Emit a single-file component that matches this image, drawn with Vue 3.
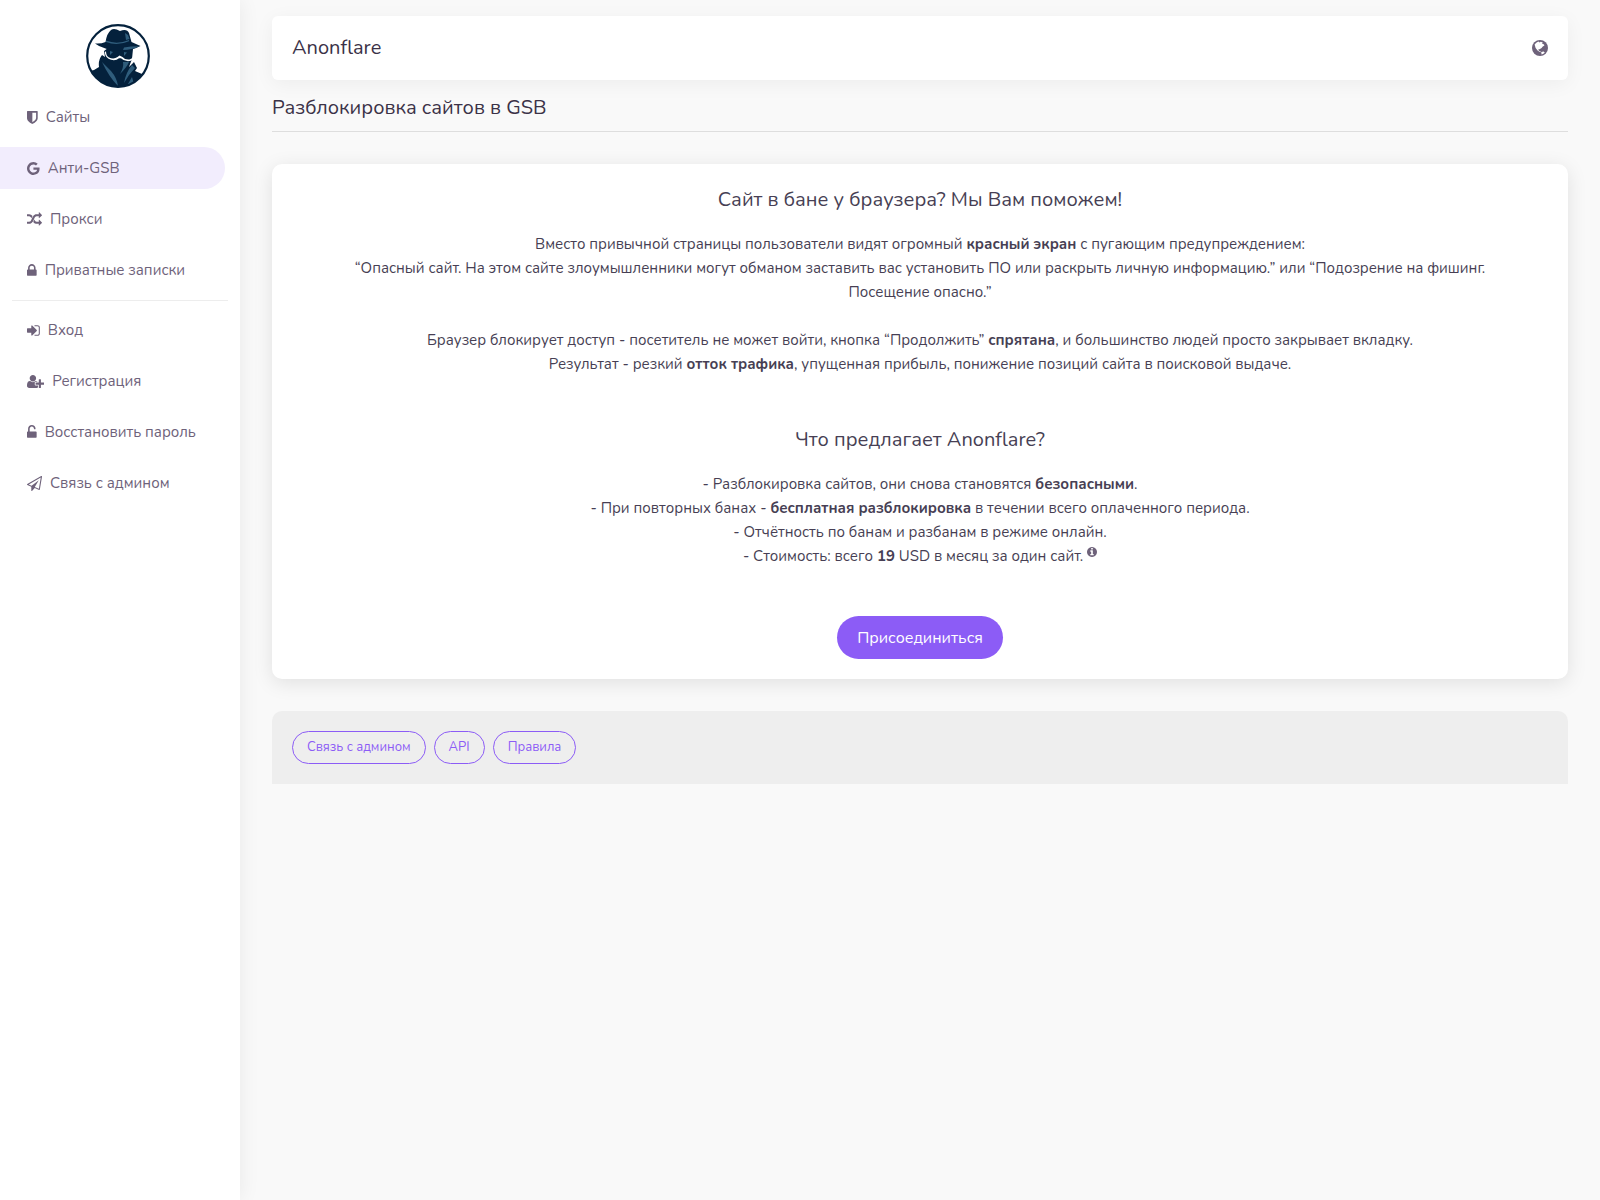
<template>
  <div class="layout">
    <aside class="sidebar">
      <a href="#" class="logo" aria-label="Anonflare">
        <svg viewBox="0 0 64 64" class="logo-img">
          <defs>
            <clipPath id="logo-clip"><circle cx="32" cy="32" r="31" /></clipPath>
          </defs>
          <circle cx="32" cy="32" r="30.8" fill="#fff" />
          <g clip-path="url(#logo-clip)">
            <!-- пальто и маска -->
            <path fill="#04213c" d="M0 48 L8 46 L13 43 Q12 36 16 31 L19 33 L18 27 L22 24 L47 25 L46 35 L43 43 L48 38 L51 44 L49 47 L56 50 L60 56 L46 66 H8 Z" />
            <!-- шляпа -->
            <path fill="#04213c" d="M9 19.5 Q15 20 19.5 18 Q21 9 25 6 Q28 3.5 34 7 Q41 4.5 43 9 L45.5 18 L54.5 22 Q45 27 35 26.5 Q17 26 9 19.5 Z" />
            <path fill="#2f5d7c" d="M20 16.5 Q31 21 43 16 L43 17.2 Q31 22.5 20 18 Z M39 9 L42 11 L43.5 15 L40 16 Z M38 23.5 Q46 22 53 22.2 Q46 26 37 26 Z" />
            <!-- очки -->
            <path fill="#fff" d="M20 27 Q20 32 23 33.5 Q28 35.5 31.5 33 L33.5 31.5 L36.5 33 Q39 36 43.5 35.5 Q47 34.5 47.5 31 L48.5 31.5 Q48.5 37 42 37.2 Q37.5 37 35 34.2 L33 34.2 Q30 37 25 35.8 Q19.5 34.5 18.8 28.5 Z" />
            <path fill="#2f5d7c" d="M24 27 L27 28 L24 31 Z M38 28 L41 28.5 L38 32 Z" />
            <!-- складки -->
            <path fill="#2f5d7c" d="M37 38 L43 38 Q41 43 34 50 Q38 43 37 38 Z M16 38 L25 47 Q31 54 32 62 Q23 53 16 38 Z M46 41 L49 44 Q43 50 38 59 Q40 48 46 41 Z M46 53 L48 60 L42 60 Z" />
          </g>
          <circle cx="32" cy="32" r="30.8" fill="none" stroke="#04213c" stroke-width="2.2" />
        </svg>
      </a>

      <nav class="menu">
        <template v-for="item in menu" :key="item.label">
          <hr v-if="item.divider" class="menu-divider" />
          <a href="#" class="menu-item" :class="{ active: item.active }">
            <svg class="icon" :viewBox="item.box"><path :d="item.path" /></svg>
            <span>{{ item.label }}</span>
          </a>
        </template>
      </nav>
    </aside>

    <main class="content">
      <header class="topbar">
        <span class="brand">Anonflare</span>
        <button type="button" class="lang-btn" aria-label="Язык">
          <svg class="globe" viewBox="0 0 16 16">
            <circle cx="8" cy="8" r="8" />
            <path class="land" d="M2.6 4.6 Q4 2.4 6.4 1.6 L7.6 2.4 L8.8 1.8 L10.8 2.4 L10 3.6 L12 4.4 L12.4 5.6 L10.8 6.4 L9.6 8 L7.6 9.2 L6.4 9.2 L6.8 10.8 L8.8 11.6 L8.4 12.2 L5.8 10.8 L3.6 8 Z M9.2 12 L11.6 11.6 L12.8 12.4 Q11.6 14 9.6 14.6 Z" />
          </svg>
        </button>
      </header>

      <h1 class="page-title">Разблокировка сайтов в GSB</h1>

      <section class="card">
        <h2>Сайт в бане у браузера? Мы Вам поможем!</h2>
        <p>
          Вместо привычной страницы пользователи видят огромный <b>красный экран</b> с пугающим предупреждением:<br />
          “Опасный сайт. На этом сайте злоумышленники могут обманом заставить вас установить ПО или раскрыть личную информацию.” или “Подозрение на фишинг. Посещение опасно.”
        </p>
        <p>
          Браузер блокирует доступ - посетитель не может войти, кнопка “Продолжить” <b>спрятана</b>, и большинство людей просто закрывает вкладку.<br />
          Результат - резкий <b>отток трафика</b>, упущенная прибыль, понижение позиций сайта в поисковой выдаче.
        </p>
        <h2 class="offer-title">Что предлагает Anonflare?</h2>
        <p>
          - Разблокировка сайтов, они снова становятся <b>безопасными</b>.<br />
          - При повторных банах - <b>бесплатная разблокировка</b> в течении всего оплаченного периода.<br />
          - Отчётность по банам и разбанам в режиме онлайн.<br />
          - Стоимость: всего <b>19</b> USD в месяц за один сайт.
          <svg class="info" viewBox="128 128 1536 1536"><path :d="infoPath" /></svg>
        </p>
        <button type="button" class="join-btn">Присоединиться</button>
      </section>

      <footer class="footer">
        <a v-for="link in footerLinks" :key="link" href="#" class="footer-link">{{ link }}</a>
      </footer>
    </main>
  </div>
</template>

<script setup>
// Пункты бокового меню
const menu = [
  {
    label: 'Сайты',
    box: '256 0 1280 1792',
    path: 'M1344 960v-640h-448v1137q119-63 213-137 235-184 235-360zm192-768v768q0 86-33.5 170.5t-83 150-118 127.5-126.5 103-121 77.5-89.5 49.5-42.5 20q-12 6-26 6t-26-6q-16-7-42.5-20t-89.5-49.5-121-77.5-126.5-103-118-127.5-83-150-33.5-170.5v-768q0-26 19-45t45-19h1152q26 0 45 19t19 45z'
  },
  {
    label: 'Анти-GSB',
    active: true,
    box: '128 0 1536 1792',
    path: 'M896 786h725q12 67 12 128 0 217-91 387.5t-259.5 266.5-386.5 96q-157 0-299-60.5t-245-163.5-163.5-245-60.5-299 60.5-299 163.5-245 245-163.5 299-60.5q300 0 515 201l-209 201q-123-119-306-119-129 0-238.5 65t-173.5 176.5-64 243.5 64 243.5 173.5 176.5 238.5 65q87 0 160-24t120-60 82-82 51.5-87 22.5-78h-436v-264z'
  },
  {
    label: 'Прокси',
    box: '0 0 1792 1792',
    path: 'M666 481q-60 92-137 273-22-45-37-72.5t-40.5-63.5-51-56.5-63-35-81.5-14.5h-224q-14 0-23-9t-9-23v-192q0-14 9-23t23-9h224q250 0 410 225zm1126 799q0 14-9 23l-320 320q-9 9-23 9-13 0-22.5-9.5t-9.5-22.5v-192q-32 0-85 .5t-81 1-73-1-71-5-64-10.5-63-18.5-58-28.5-59-40-55-53.5-56-69.5q59-93 136-273 22 45 37 72.5t40.5 63.5 51 56.5 63 35 81.5 14.5h256v-192q0-14 9-23t23-9q12 0 24 10l319 319q9 9 9 23zm0-896q0 14-9 23l-320 320q-9 9-23 9-13 0-22.5-9.5t-9.5-22.5v-192h-256q-48 0-87 15t-69 45-51 61.5-45 77.5q-32 62-78 171-29 66-49.5 111t-54 105-64 100-74 83-90 68.5-106.5 42-128 16.5h-224q-14 0-23-9t-9-23v-192q0-14 9-23t23-9h224q48 0 87-15t69-45 51-61.5 45-77.5q32-62 78-171 29-66 49.5-111t54-105 64-100 74-83 90-68.5 106.5-42 128-16.5h256v-192q0-14 9-23t23-9q12 0 24 10l319 319q9 9 9 23z'
  },
  {
    label: 'Приватные записки',
    box: '320 0 1152 1792',
    path: 'M640 768h512v-192q0-106-75-181t-181-75-181 75-75 181v192zm832 96v576q0 40-28 68t-68 28h-960q-40 0-68-28t-28-68v-576q0-40 28-68t68-28h32v-192q0-184 132-316t316-132 316 132 132 316v192h32q40 0 68 28t28 68z'
  },
  {
    label: 'Вход',
    divider: true,
    box: '128 0 1536 1792',
    path: 'M1312 896q0 26-19 45l-544 544q-19 19-45 19t-45-19-19-45v-288h-448q-26 0-45-19t-19-45v-384q0-26 19-45t45-19h448v-288q0-26 19-45t45-19 45 19l544 544q19 19 19 45zm352-352v704q0 119-84.5 203.5t-203.5 84.5h-320q-13 0-22.5-9.5t-9.5-22.5q0-4-1-20t-.5-26.5 3-23.5 10-19.5 20.5-6.5h320q66 0 113-47t47-113v-704q0-66-47-113t-113-47h-312l-11.5-1-11.5-3-8-5.5-7-9-2-13.5q0-4-1-20t-.5-26.5 3-23.5 10-19.5 20.5-6.5h320q119 0 203.5 84.5t84.5 203.5z'
  },
  {
    label: 'Регистрация',
    box: '0 0 2048 1792',
    path: 'M704 896q-159 0-271.5-112.5T320 512t112.5-271.5T704 128t271.5 112.5T1088 512 975.5 783.5 704 896zm960 128h352q13 0 22.5 9.5t9.5 22.5v192q0 13-9.5 22.5t-22.5 9.5h-352v352q0 13-9.5 22.5t-22.5 9.5h-192q-13 0-22.5-9.5t-9.5-22.5v-352h-352q-13 0-22.5-9.5t-9.5-22.5v-192q0-13 9.5-22.5t22.5-9.5h352V672q0-13 9.5-22.5t22.5-9.5h192q13 0 22.5 9.5t9.5 22.5v352zm-736 224q0 52 38 90t90 38h256v238q-68 50-171 50H267q-121 0-194-69T0 1405q0-53 3.5-103.5t14-109T44 1084t43-97.5 62-81 85.5-53.5T346 832q19 0 39 17 79 61 154.5 91.5T704 971t164.5-30.5T1023 849q20-17 39-17 132 0 217 96h-223q-52 0-90 38t-38 90v192z'
  },
  {
    label: 'Восстановить пароль',
    box: '320 0 1152 1792',
    path: 'M1376 768q40 0 68 28t28 68v576q0 40-28 68t-68 28h-960q-40 0-68-28t-28-68v-576q0-40 28-68t68-28h32v-320q0-185 131.5-316.5t316.5-131.5 316.5 131.5 131.5 316.5q0 26-19 45t-45 19h-64q-26 0-45-19t-19-45q0-106-75-181t-181-75-181 75-75 181v320h736z'
  },
  {
    label: 'Связь с админом',
    box: '0 0 1792 1792',
    path: 'M1764 11q33 24 27 64l-256 1536q-5 29-32 45-14 8-31 8-11 0-24-5l-527-215-298 327q-18 21-47 21-14 0-23-4-19-7-30-23.5t-11-36.5v-452l-472-193q-37-14-40-55-3-39 32-59l1664-960q35-21 68 2zm-342 1499l221-1323-1434 827 336 137 863-639-478 797z'
  }
];

const infoPath = 'M1152 1376v-160q0-14-9-23t-23-9h-96v-512q0-14-9-23t-23-9h-320q-14 0-23 9t-9 23v160q0 14 9 23t23 9h96v320h-96q-14 0-23 9t-9 23v160q0 14 9 23t23 9h448q14 0 23-9t9-23zm-128-896v-160q0-14-9-23t-23-9h-192q-14 0-23 9t-9 23v160q0 14 9 23t23 9h192q14 0 23-9t9-23zm640 416q0 209-103 385.5t-279.5 279.5-385.5 103-385.5-103-279.5-279.5-103-385.5 103-385.5 279.5-279.5 385.5-103 385.5 103 279.5 279.5 103 385.5z';

// Ссылки в подвале
const footerLinks = ['Связь с админом', 'API', 'Правила'];
</script>

<style>
body {
  margin: 0;
  background: #f9f9f9;
}
</style>

<style scoped>
.layout {
  display: flex;
  min-height: 100vh;
  font-family: Nunito, "Noto Sans", sans-serif;
  font-size: 15px;
  line-height: 24px;
  color: #473f54;
}

/* Боковая панель */
.sidebar {
  flex: 0 0 240px;
  box-sizing: border-box;
  padding-top: 24px;
  background: #fff;
  box-shadow: 0 0 20px rgba(0, 0, 0, 0.07);
}

.logo {
  display: block;
  width: 64px;
  height: 64px;
  margin: 0 auto 8px 86px;
}

.logo-img {
  display: block;
  width: 64px;
  height: 64px;
}

.menu {
  display: flex;
  flex-direction: column;
  gap: 9px;
}

.menu-item {
  display: flex;
  align-items: center;
  gap: 8px;
  height: 42px;
  margin-right: 15px;
  padding-left: 27px;
  border-radius: 0 21px 21px 0;
  color: #6e627a;
  text-decoration: none;
  white-space: nowrap;
}

.menu-item.active {
  background: #f2edfd;
}

.menu-divider {
  width: 216px;
  height: 1px;
  margin: 0 12px -1px;
  border: none;
  background: #ededed;
}

.icon {
  flex: none;
  height: 15px;
  fill: currentColor;
}

/* Контент */
.content {
  flex: 1;
  min-width: 0;
  padding: 16px 32px;
}

.topbar {
  display: flex;
  align-items: center;
  justify-content: space-between;
  height: 64px;
  box-sizing: border-box;
  padding: 0 20px;
  border-radius: 6px;
  background: #fff;
  box-shadow: 0 4px 20px rgba(0, 0, 0, 0.05);
}

.brand {
  font-size: 20px;
  color: #3b3247;
}

.lang-btn {
  padding: 0;
  border: none;
  background: none;
  cursor: pointer;
}

.globe {
  display: block;
  width: 16px;
  height: 16px;
  fill: #6e627a;
}

.globe .land {
  fill: #fff;
}

.page-title {
  margin: 0 0 32px;
  padding: 16px 0 11px;
  border-bottom: 1px solid #dedede;
  font-size: 20px;
  line-height: 24px;
  font-weight: 400;
  color: #3b3247;
}

.card {
  padding: 20px 56px;
  border-radius: 10px;
  background: #fff;
  box-shadow: 0 4px 20px rgba(0, 0, 0, 0.1);
  text-align: center;
}

.card h2 {
  margin: 0;
  padding: 4px 0 20px;
  font-size: 20px;
  line-height: 24px;
  font-weight: 400;
}

.card p {
  margin: 0 0 24px;
}

.card .offer-title {
  padding-top: 28px;
}

.info {
  width: 10px;
  height: 10px;
  vertical-align: 4px;
  fill: #6e627a;
}

.join-btn {
  height: 43px;
  margin-top: 24px;
  padding: 0 20px;
  border: none;
  border-radius: 22px;
  background: #8c5cf6;
  color: #fff;
  font-family: inherit;
  font-size: 16px;
  cursor: pointer;
}

.footer {
  display: flex;
  gap: 8px;
  margin-top: 32px;
  padding: 20px;
  border-radius: 10px 10px 0 0;
  background: #eee;
}

.footer-link {
  padding: 0 14px;
  border: 1px solid #8c5cf6;
  border-radius: 17px;
  color: #8c5cf6;
  font-size: 13px;
  line-height: 31px;
  text-decoration: none;
}
</style>
